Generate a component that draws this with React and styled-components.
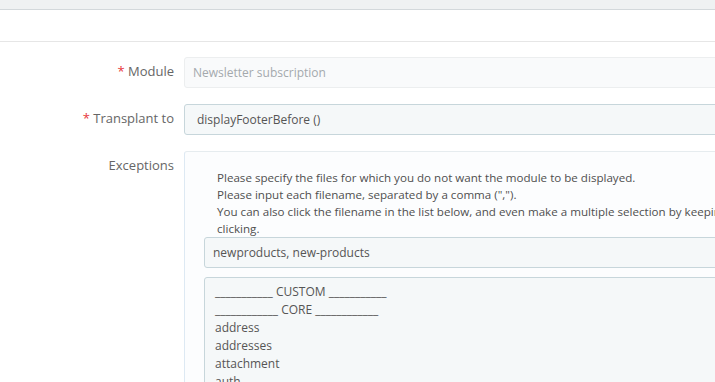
import styled, { createGlobalStyle } from "styled-components";

const GlobalStyle = createGlobalStyle`
  html, body {
    margin: 0;
    padding: 0;
    background: #ffffff;
    overflow: hidden;
  }
  body {
    font-family: "Open Sans", "Liberation Sans", sans-serif;
    font-size: 12px;
    color: #555555;
  }
`;

const exceptionFiles = [
  "___________ CUSTOM ___________",
  "____________ CORE ____________",
  "address",
  "addresses",
  "attachment",
  "auth",
  "best-sales",
  "cart",
];

export default function App() {
  return (
    <>
      <GlobalStyle />
      <Page>
        <TopBar />
        <Toolbar />
        <Form>
          <Row>
            <Label>
              <Required>*</Required> Module
            </Label>
            <DisabledInput placeholder="Newsletter subscription" disabled />
          </Row>
          <Row>
            <Label>
              <Required>*</Required> Transplant to
            </Label>
            <SelectBox>displayFooterBefore ()</SelectBox>
          </Row>
          <Row>
            <Label>Exceptions</Label>
            <Panel>
              <Help>
                Please specify the files for which you do not want the module to be displayed.
                <br />
                Please input each filename, separated by a comma (",").
                <br />
                You can also click the filename in the list below, and even make a multiple selection by keeping the Ctrl key down while
                clicking.
              </Help>
              <TextInput defaultValue="newproducts, new-products" />
              <FileList>
                {exceptionFiles.map((f) => (
                  <FileItem key={f}>{f}</FileItem>
                ))}
              </FileList>
            </Panel>
          </Row>
        </Form>
      </Page>
    </>
  );
}

const Page = styled.div`
  width: 960px;
  height: 382px;
  overflow: hidden;
`;

const TopBar = styled.div`
  height: 9px;
  background: #eff1f2;
  border-bottom: 1px solid #d3d8db;
`;

const Toolbar = styled.div`
  height: 31px;
  background: #ffffff;
  border-bottom: 1px solid #e6e6e6;
`;

const Form = styled.div`
  display: flex;
  flex-direction: column;
  gap: 16px;
  padding-top: 15px;
`;

const Row = styled.div`
  display: grid;
  grid-template-columns: 174px 1fr;
  column-gap: 10px;
  align-items: start;
`;

const Label = styled.label`
  text-align: right;
  font-size: 13px;
  line-height: 17px;
  padding-top: 6px;
  color: #666666;
`;

const Required = styled.span`
  color: #e7373c;
`;

const DisabledInput = styled.input`
  box-sizing: border-box;
  height: 31px;
  width: 100%;
  padding: 0 8px;
  font-family: inherit;
  font-size: 12px;
  background: #f9fafb;
  border: 1px solid #eceeef;
  border-radius: 3px;
  outline: none;
  &::placeholder {
    color: #a4a9ad;
  }
`;

const SelectBox = styled.div`
  box-sizing: border-box;
  height: 31px;
  display: flex;
  align-items: center;
  padding: 0 12px;
  background: #f5f8f9;
  border: 1px solid #c7d6db;
  border-radius: 3px;
  color: #555555;
`;

const Panel = styled.div`
  box-sizing: border-box;
  min-height: 260px;
  padding: 17px 19px 0;
  background: #fcfdfe;
  border: 1px solid #e6ecef;
  border-left-color: #dde9f3;
  border-radius: 3px;
`;

const Help = styled.div`
  padding-left: 13px;
  font-size: 11.6px;
  line-height: 17px;
  color: #4f4f4f;
  max-width: 665px;
`;

const TextInput = styled.input`
  box-sizing: border-box;
  display: block;
  width: 100%;
  height: 31px;
  padding: 0 8px;
  font-family: inherit;
  font-size: 12px;
  color: #555555;
  background: #f5f8f9;
  border: 1px solid #c7d6db;
  border-radius: 3px;
  outline: none;
`;

const FileList = styled.div`
  margin-top: 9px;
  padding: 5px 10px;
  background: #f5f8f9;
  border: 1px solid #c7d6db;
  border-radius: 3px;
  min-height: 200px;
`;

const FileItem = styled.div`
  line-height: 18px;
  color: #555555;
`;
